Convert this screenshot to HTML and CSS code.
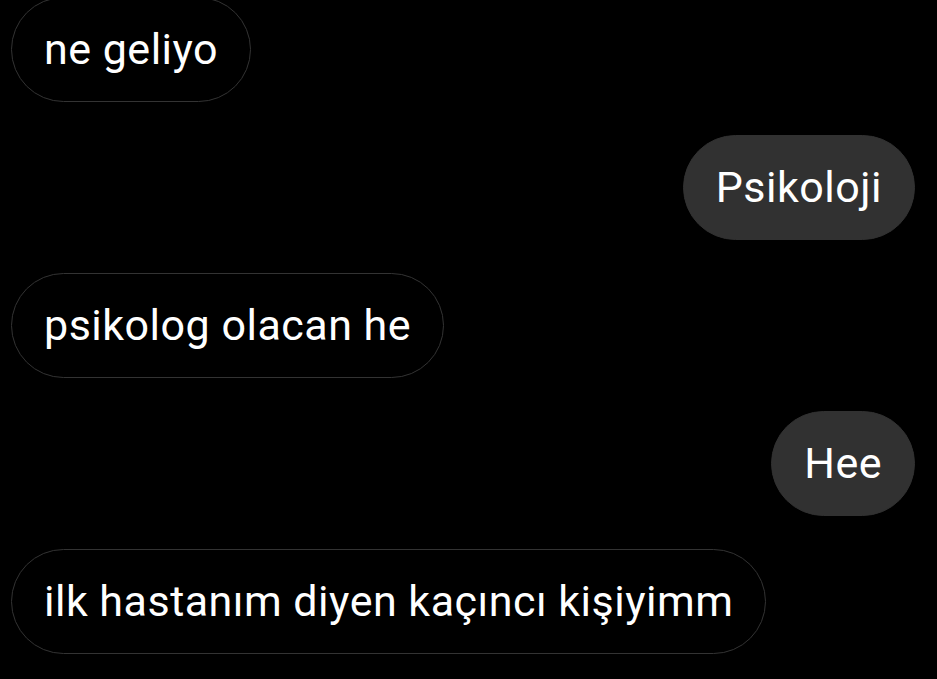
FILE: index.html
```html
<!DOCTYPE html>
<html lang="tr">
<head>
<meta charset="utf-8">
<link rel="stylesheet" href="styles.css">
</head>
<body>
<div class="chat">
  <div class="msg in">ne geliyo</div>
  <div class="msg out">Psikoloji</div>
  <div class="msg in">psikolog olacan he</div>
  <div class="msg out">Hee</div>
  <div class="msg in">ilk hastanım diyen kaçıncı kişiyimm</div>
</div>
</body>
</html>
```
FILE: styles.css
```css
html, body {
  margin: 0;
  background: #000;
}
body {
  width: 937px;
  height: 679px;
  overflow: hidden;
  font-family: Roboto, "Noto Sans", sans-serif;
}
.chat {
  display: flex;
  flex-direction: column;
  gap: 33px;
  margin-top: -3px;
  padding: 0 22px 0 11px;
}
.msg {
  box-sizing: border-box;
  height: 105px;
  line-height: 103px;
  padding: 0 32px;
  border-radius: 53px;
  font-size: 43px;
  letter-spacing: 0.5px;
  color: #fff;
  white-space: nowrap;
}
.msg.in {
  align-self: flex-start;
  border: 1.5px solid #333;
  background: #000;
}
.msg.out {
  align-self: flex-end;
  border: 1px solid #313131;
  background: #313131;
}
```
